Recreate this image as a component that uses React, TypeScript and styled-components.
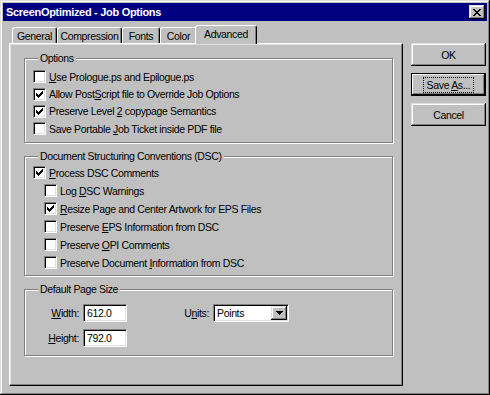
import React from 'react'
import styled, { createGlobalStyle, css } from 'styled-components'

const GlobalStyle = createGlobalStyle`
  html, body {
    margin: 0;
    padding: 0;
    background: #c0c0c0;
  }
  body {
    font-family: "Liberation Sans", Arial, sans-serif;
    font-size: 10.5px;
    letter-spacing: -0.35px;
    color: #000;
  }
`

const raised = css`
  box-shadow: inset -1px -1px 0 #000, inset 1px 1px 0 #dfdfdf, inset -2px -2px 0 #808080, inset 2px 2px 0 #fff;
`

const sunken = css`
  border: 1px solid;
  border-color: #808080 #fff #fff #808080;
  box-shadow: inset 1px 1px 0 #000, inset -1px -1px 0 #dfdfdf;
`

const Window = styled.div`
  width: 490px;
  height: 395px;
  box-sizing: border-box;
  padding: 3px;
  background: #c0c0c0;
  display: flex;
  flex-direction: column;
  ${raised}
`

const TitleBar = styled.div`
  height: 18px;
  background: #000080;
  color: #fff;
  display: flex;
  align-items: center;
  justify-content: space-between;
  padding: 0 2px 0 3px;
`

const Title = styled.span`
  font-weight: bold;
  font-size: 11px;
  letter-spacing: -0.3px;
`

const CloseButton = styled.div`
  width: 16px;
  height: 14px;
  background: #c0c0c0;
  display: flex;
  align-items: center;
  justify-content: center;
  ${raised}
`

const Body = styled.div`
  display: flex;
  padding: 3px 0 0 6px;
  gap: 8px;
`

const TabControl = styled.div`
  width: 394px;
  display: flex;
  flex-direction: column;
`

const TabStrip = styled.div`
  display: flex;
  align-items: flex-end;
  height: 19px;
  padding-left: 3px;
`

const Tab = styled.div<{ $active?: boolean; $width: number }>`
  width: ${p => p.$width + (p.$active ? 4 : 0)}px;
  height: ${p => (p.$active ? 19 : 16)}px;
  box-sizing: border-box;
  margin: 0 ${p => (p.$active ? '-2px -1px' : '0 0')};
  padding-bottom: ${p => (p.$active ? 2 : 0)}px;
  display: flex;
  align-items: center;
  justify-content: center;
  background: #c0c0c0;
  border: 1px solid;
  border-bottom: none;
  border-color: #fff #000 transparent #fff;
  border-radius: 3px 3px 0 0;
  box-shadow: inset -1px 0 0 #808080;
  position: relative;
  z-index: ${p => (p.$active ? 1 : 0)};
`

const Panel = styled.div`
  height: 343px;
  box-sizing: border-box;
  border: 1px solid;
  border-color: #fff #000 #000 #fff;
  box-shadow: inset -1px -1px 0 #808080, inset 1px 1px 0 #dfdfdf;
  padding: 8px 9px 0 14px;
  display: flex;
  flex-direction: column;
  gap: 7px;
`

const Group = styled.fieldset<{ $pad: string }>`
  margin: 0;
  padding: ${p => p.$pad};
  border: 1px solid #808080;
  box-shadow: 1px 1px 0 #fff, inset 1px 1px 0 #fff;
  min-width: 0;
`

const Legend = styled.legend`
  padding: 0 2px;
  margin-left: 5px;
  line-height: 13px;
  background: #c0c0c0;
`

const CheckList = styled.div<{ $row: number }>`
  display: grid;
  grid-auto-rows: ${p => p.$row}px;
`

const CheckRow = styled.div<{ $indent?: boolean }>`
  display: flex;
  align-items: center;
  gap: 3px;
  padding-left: ${p => (p.$indent ? 11 : 0)}px;
  white-space: nowrap;
`

const Box = styled.span`
  width: 13px;
  height: 13px;
  box-sizing: border-box;
  background: #fff;
  display: flex;
  align-items: center;
  justify-content: center;
  flex: none;
  ${sunken}
`

const FieldGrid = styled.div`
  display: grid;
  grid-template-columns: 46px 44px 48px 26px 76px;
  grid-template-rows: 18px 18px;
  column-gap: 4px;
  row-gap: 7px;
  align-items: center;
`

const Label = styled.label`
  text-align: right;
  white-space: nowrap;
`

const TextField = styled.div`
  height: 18px;
  box-sizing: border-box;
  background: #fff;
  display: flex;
  align-items: center;
  padding-left: 3px;
  ${sunken}
`

const Select = styled.div`
  height: 18px;
  box-sizing: border-box;
  background: #fff;
  display: flex;
  align-items: center;
  justify-content: space-between;
  padding: 0 1px 0 3px;
  grid-column: 5;
  ${sunken}
`

const DropButton = styled.span`
  width: 16px;
  height: 14px;
  background: #c0c0c0;
  display: flex;
  align-items: center;
  justify-content: center;
  ${raised}
`

const ButtonColumn = styled.div`
  display: flex;
  flex-direction: column;
  gap: 7px;
  padding-top: 19px;
`

const Button = styled.div<{ $default?: boolean }>`
  width: 75px;
  height: 23px;
  box-sizing: border-box;
  background: #c0c0c0;
  display: flex;
  align-items: center;
  justify-content: center;
  ${raised}
  ${p =>
    p.$default &&
    css`
      border: 1px solid #000;
      box-shadow: inset -1px -1px 0 #000, inset 1px 1px 0 #fff, inset -2px -2px 0 #808080;
    `}
`

const FocusRing = styled.span`
  outline: 1px dotted #000;
  padding: 1px 3px;
  line-height: 12px;
`

const CheckMark = () => (
  <svg width="7" height="7" viewBox="0 0 7 7" shapeRendering="crispEdges">
    <path
      d="M6 0h1v1h-1z M5 1h2v1h-2z M0 2h1v1h-1z M4 2h3v1h-3z M0 3h2v1h-2z M3 3h3v1h-3z M0 4h5v1h-5z M1 5h3v1h-3z M2 6h1v1h-1z"
      fill="#000"
    />
  </svg>
)

const CloseGlyph = () => (
  <svg width="8" height="7" viewBox="0 0 8 7" shapeRendering="crispEdges">
    <path
      d="M0 0h2v1h-2z M6 0h2v1h-2z M1 1h2v1h-2z M5 1h2v1h-2z M2 2h4v1h-4z M3 3h2v1h-2z M2 4h4v1h-4z M1 5h2v1h-2z M5 5h2v1h-2z M0 6h2v1h-2z M6 6h2v1h-2z"
      fill="#000"
    />
  </svg>
)

const DownArrow = () => (
  <svg width="7" height="4" viewBox="0 0 7 4" shapeRendering="crispEdges">
    <path d="M0 0h7v1h-7z M1 1h5v1h-5z M2 2h3v1h-3z M3 3h1v1h-1z" fill="#000" />
  </svg>
)

type Item = { pre: string; key: string; post: string; checked: boolean; indent?: boolean }

const options: Item[] = [
  { pre: '', key: 'U', post: 'se Prologue.ps and Epilogue.ps', checked: false },
  { pre: 'Allow Post', key: 'S', post: 'cript file to Override Job Options', checked: true },
  { pre: 'Preserve Level ', key: '2', post: ' copypage Semantics', checked: true },
  { pre: 'Save Portable ', key: 'J', post: 'ob Ticket inside PDF file', checked: false },
]

const dsc: Item[] = [
  { pre: '', key: 'P', post: 'rocess DSC Comments', checked: true },
  { pre: 'Log ', key: 'D', post: 'SC Warnings', checked: false, indent: true },
  { pre: '', key: 'R', post: 'esize Page and Center Artwork for EPS Files', checked: true, indent: true },
  { pre: 'Preserve ', key: 'E', post: 'PS Information from DSC', checked: false, indent: true },
  { pre: 'Preserve ', key: 'O', post: 'PI Comments', checked: false, indent: true },
  { pre: 'Preserve Document ', key: 'I', post: 'nformation from DSC', checked: false, indent: true },
]

const tabs = [
  { label: 'General', width: 45 },
  { label: 'Compression', width: 65 },
  { label: 'Fonts', width: 38 },
  { label: 'Color', width: 37 },
  { label: 'Advanced', width: 58 },
]

function CheckItem({ item }: { item: Item }) {
  return (
    <CheckRow $indent={item.indent}>
      <Box>{item.checked && <CheckMark />}</Box>
      <span>
        {item.pre}
        <u>{item.key}</u>
        {item.post}
      </span>
    </CheckRow>
  )
}

export default function App() {
  return (
    <>
      <GlobalStyle />
      <Window>
        <TitleBar>
          <Title>ScreenOptimized - Job Options</Title>
          <CloseButton>
            <CloseGlyph />
          </CloseButton>
        </TitleBar>
        <Body>
          <TabControl>
            <TabStrip>
              {tabs.map(t => (
                <Tab key={t.label} $width={t.width} $active={t.label === 'Advanced'}>
                  {t.label}
                </Tab>
              ))}
            </TabStrip>
            <Panel>
              <Group $pad="3px 8px 4px">
                <Legend>Options</Legend>
                <CheckList $row={17.4}>
                  {options.map(o => (
                    <CheckItem key={o.pre + o.key} item={o} />
                  ))}
                </CheckList>
              </Group>
              <Group $pad="1px 8px 3px">
                <Legend>Document Structuring Conventions (DSC)</Legend>
                <CheckList $row={18}>
                  {dsc.map(o => (
                    <CheckItem key={o.pre + o.key} item={o} />
                  ))}
                </CheckList>
              </Group>
              <Group $pad="8px 8px 8px">
                <Legend>Default Page Size</Legend>
                <FieldGrid>
                  <Label>
                    <u>W</u>idth:
                  </Label>
                  <TextField>612.0</TextField>
                  <span />
                  <Label>
                    U<u>n</u>its:
                  </Label>
                  <Select>
                    <span>Points</span>
                    <DropButton>
                      <DownArrow />
                    </DropButton>
                  </Select>
                  <Label>
                    <u>H</u>eight:
                  </Label>
                  <TextField>792.0</TextField>
                </FieldGrid>
              </Group>
            </Panel>
          </TabControl>
          <ButtonColumn>
            <Button>OK</Button>
            <Button $default>
              <FocusRing>
                Save <u>A</u>s...
              </FocusRing>
            </Button>
            <Button>Cancel</Button>
          </ButtonColumn>
        </Body>
      </Window>
    </>
  )
}
